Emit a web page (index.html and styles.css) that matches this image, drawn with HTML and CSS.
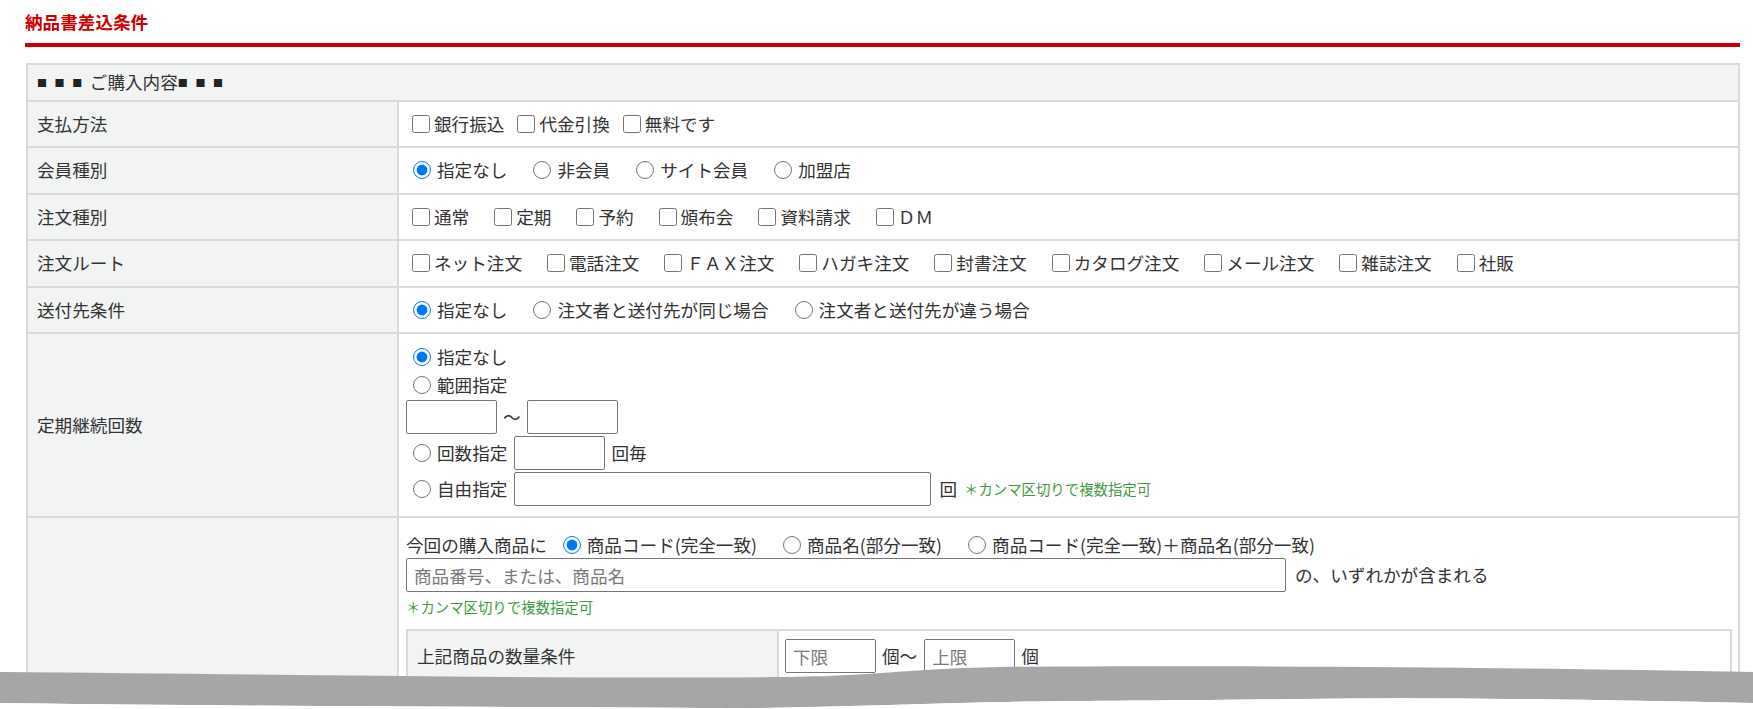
FILE: index.html
```html
<!DOCTYPE html>
<html lang="ja">
  <head>
    <meta charset="UTF-8" />
    <meta name="viewport" content="width=device-width, initial-scale=1.0" />
    <title>納品書差込条件</title>
    <link rel="stylesheet" href="styles.css">
  </head>

  <body>
    <div class="page">
      <h1 class="page-title">納品書差込条件</h1>
      <div class="title-bar"></div>

      <table class="cond-table">
        <colgroup>
          <col class="label-col">
          <col>
        </colgroup>
        <tr>
          <th colspan="2" class="section-head"><span class="sq">■■■</span>ご購入内容<span class="sq">■■■</span></th>
        </tr>
        <tr>
          <th class="label">支払方法</th>
          <td class="value">
            <div class="choices">
              <label class="opt tight"><input type="checkbox">銀行振込</label>
              <label class="opt tight"><input type="checkbox">代金引換</label>
              <label class="opt tight"><input type="checkbox">無料です</label>
            </div>
          </td>
        </tr>
        <tr>
          <th class="label">会員種別</th>
          <td class="value">
            <div class="choices">
              <label class="opt"><input type="radio" name="member" checked>指定なし</label>
              <label class="opt"><input type="radio" name="member">非会員</label>
              <label class="opt"><input type="radio" name="member">サイト会員</label>
              <label class="opt"><input type="radio" name="member">加盟店</label>
            </div>
          </td>
        </tr>
        <tr>
          <th class="label">注文種別</th>
          <td class="value">
            <div class="choices">
              <label class="opt"><input type="checkbox">通常</label>
              <label class="opt"><input type="checkbox">定期</label>
              <label class="opt"><input type="checkbox">予約</label>
              <label class="opt"><input type="checkbox">頒布会</label>
              <label class="opt"><input type="checkbox">資料請求</label>
              <label class="opt"><input type="checkbox">ＤＭ</label>
            </div>
          </td>
        </tr>
        <tr>
          <th class="label">注文ルート</th>
          <td class="value">
            <div class="choices">
              <label class="opt"><input type="checkbox">ネット注文</label>
              <label class="opt"><input type="checkbox">電話注文</label>
              <label class="opt"><input type="checkbox">ＦＡＸ注文</label>
              <label class="opt"><input type="checkbox">ハガキ注文</label>
              <label class="opt"><input type="checkbox">封書注文</label>
              <label class="opt"><input type="checkbox">カタログ注文</label>
              <label class="opt"><input type="checkbox">メール注文</label>
              <label class="opt"><input type="checkbox">雑誌注文</label>
              <label class="opt"><input type="checkbox">社販</label>
            </div>
          </td>
        </tr>
        <tr>
          <th class="label">送付先条件</th>
          <td class="value">
            <div class="choices">
              <label class="opt"><input type="radio" name="dest" checked>指定なし</label>
              <label class="opt"><input type="radio" name="dest">注文者と送付先が同じ場合</label>
              <label class="opt"><input type="radio" name="dest">注文者と送付先が違う場合</label>
            </div>
          </td>
        </tr>
        <tr>
          <th class="label">定期継続回数</th>
          <td class="value stack-cell">
            <div class="line">
              <label class="opt"><input type="radio" name="times" checked>指定なし</label>
            </div>
            <div class="line">
              <label class="opt"><input type="radio" name="times">範囲指定</label>
            </div>
            <div class="field-line">
              <input type="text" class="num-box">
              <span class="wave">〜</span>
              <input type="text" class="num-box">
            </div>
            <div class="field-line">
              <label class="opt flat"><input type="radio" name="times">回数指定</label>
              <input type="text" class="num-box gap-left">
              <span class="unit">回毎</span>
            </div>
            <div class="field-line">
              <label class="opt flat"><input type="radio" name="times">自由指定</label>
              <input type="text" class="free-box gap-left">
              <span class="unit wide">回</span>
              <span class="note">＊カンマ区切りで複数指定可</span>
            </div>
          </td>
        </tr>
        <tr>
          <th class="label"></th>
          <td class="value item-cell">
            <div class="line first">
              <span class="lead">今回の購入商品に</span>
              <label class="opt"><input type="radio" name="item" checked>商品コード(完全一致)</label>
              <label class="opt"><input type="radio" name="item">商品名(部分一致)</label>
              <label class="opt"><input type="radio" name="item">商品コード(完全一致)＋商品名(部分一致)</label>
            </div>
            <div class="field-line tight-line">
              <input type="text" class="item-box" placeholder="商品番号、または、商品名">
              <span class="after-box">の、いずれかが含まれる</span>
            </div>
            <div class="note-line">
              <span class="note">＊カンマ区切りで複数指定可</span>
            </div>

            <table class="sub-table">
              <colgroup>
                <col class="label-col">
                <col>
              </colgroup>
              <tr>
                <th class="label">上記商品の数量条件</th>
                <td class="sub-value">
                  <div class="field-line">
                    <input type="text" class="num-box" placeholder="下限">
                    <span class="unit">個〜</span>
                    <input type="text" class="num-box gap-left" placeholder="上限">
                    <span class="unit">個</span>
                  </div>
                </td>
              </tr>
            </table>
          </td>
        </tr>
      </table>
    </div>

    <svg class="tear" width="1753" height="49" viewBox="0 660 1753 49" xmlns="http://www.w3.org/2000/svg">
      <path fill="#a6a6a6" d="M0,672 C250,674 550,679 780,677 C880,676 900,669 1000,667 C1200,665 1500,667 1753,672 L1753,703 C1600,700 1450,697 1300,699 C1150,701 1050,701 1000,702 C900,704 800,709 700,708 C500,707 200,706 0,703 Z"/>
      <path fill="#ffffff" d="M0,703 C200,706 500,707 700,708 C800,709 900,704 1000,702 C1050,701 1150,701 1300,699 C1450,697 1600,700 1753,703 L1753,709 L0,709 Z"/>
    </svg>
  </body>
</html>
```

FILE: styles.css
```css
html{
  height: 709px;
  overflow: hidden;
}

body{
  margin: 0;
  height: 709px;
  overflow: hidden;
  position: relative;
  background-color: white;
  color: #333333;
  font-family: "Noto Sans CJK JP", "Noto Sans", sans-serif;
  font-size: 17.6px;
}

.page{
  padding: 0 13px 0 25px;
}

.page-title{
  margin: 0;
  padding-top: 8px;
  font-size: 17.6px;
  line-height: 28px;
  font-weight: bold;
  color: #cc0000;
}

.title-bar{
  height: 4px;
  margin-top: 7px;
  background-color: #cc0000;
}

.cond-table,
.sub-table{
  border-collapse: separate;
  border-spacing: 0;
  border-top: 2px solid #dadada;
  border-left: 2px solid #dadada;
  table-layout: fixed;
}

.cond-table{
  width: 1714px;
  margin-top: 16px;
  margin-left: 1px;
}

.label-col{
  width: 371px;
}

.cond-table th,
.cond-table td{
  border-right: 2px solid #dadada;
  border-bottom: 2px solid #dadada;
  text-align: left;
  font-weight: normal;
  line-height: 28.5px;
}

.section-head{
  background-color: #f2f3f3;
  padding: 3px 9px;
}

.sq{
  font-size: 10px;
  line-height: 1;
  letter-spacing: 7.6px;
  position: relative;
  top: -2px;
  color: #222222;
}

.label{
  padding: 8px 9px;
  background-color: #f2f3f3;
  vertical-align: middle;
}

.value{
  padding: 8px 6px 8px 7px;
  vertical-align: middle;
}

.choices,
.line,
.field-line{
  display: flex;
  align-items: center;
}

.opt{
  display: inline-flex;
  align-items: center;
  margin-right: 19px;
  white-space: nowrap;
}

.opt.tight{
  margin-right: 7px;
}

.opt.flat{
  margin-right: 0;
}

.opt input[type=checkbox]{
  width: 18px;
  height: 18px;
  margin: 0 4px 0 6px;
}

.opt input[type=radio]{
  width: 18px;
  height: 18px;
  margin: 0 6px 0 7px;
}

.stack-cell{
  padding-top: 9px;
  padding-bottom: 9px;
}

.line{
  height: 28px;
}

.field-line{
  height: 36px;
}

.num-box,
.free-box,
.item-box{
  box-sizing: border-box;
  height: 34px;
  margin: 0;
  padding: 0 7px;
  border: 1px solid #767676;
  border-radius: 2px;
  font-family: inherit;
  font-size: 17.6px;
  color: #333333;
  background-color: white;
}

.num-box::placeholder,
.item-box::placeholder{
  color: #7a7a7a;
}

.num-box{
  width: 91px;
}

.free-box{
  width: 417px;
}

.gap-left{
  margin-left: 7px;
}

.wave{
  margin: 0 6px;
}

.unit{
  margin-left: 6px;
  white-space: nowrap;
}

.unit.wide{
  margin-left: 8px;
}

.note{
  margin-left: 7px;
  font-size: 14.4px;
  color: #3f9a3f;
  white-space: nowrap;
}

.item-cell{
  padding-top: 14px;
  vertical-align: top;
}

.line.first{
  height: 26px;
}

.lead{
  margin-right: 9px;
  white-space: nowrap;
}

.tight-line{
  height: 34px;
}

.item-box{
  width: 880px;
}

.after-box{
  margin-left: 9px;
  white-space: nowrap;
}

.note-line{
  margin-top: 5px;
  line-height: 18px;
}

.note-line .note{
  margin-left: 0;
}

.sub-table{
  width: 1326px;
  margin-top: 13px;
}

.sub-table .label{
  padding: 0 9px;
}

.sub-value{
  padding: 7px 6px;
}

.tear{
  position: absolute;
  left: 0;
  top: 660px;
}
```
